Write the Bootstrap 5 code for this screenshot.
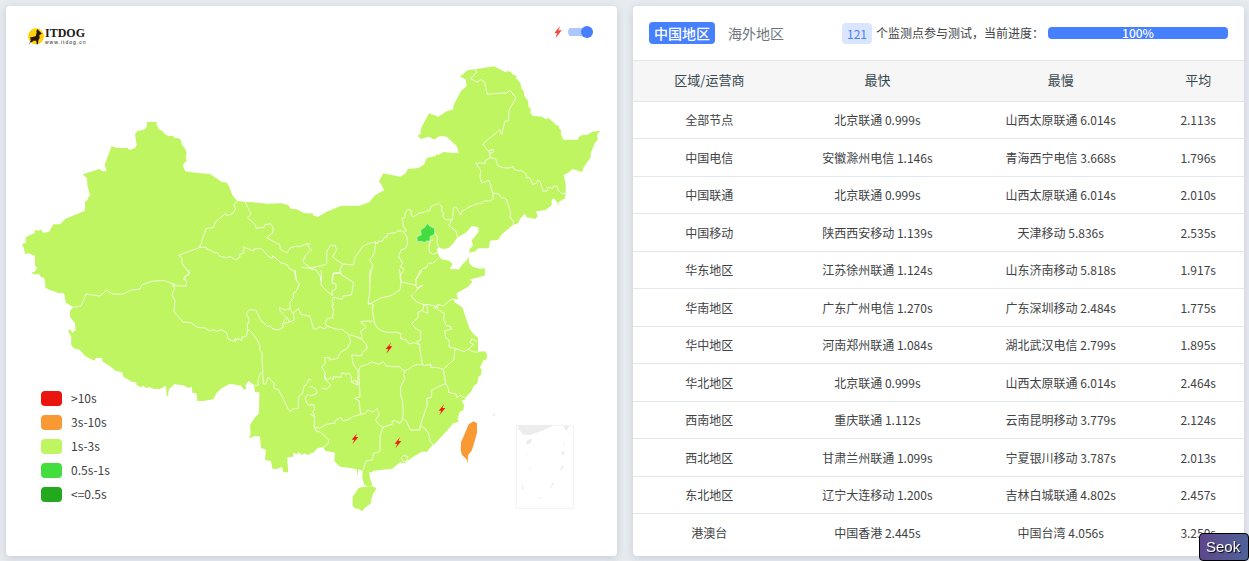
<!DOCTYPE html>
<html lang="zh-CN">
<head>
<meta charset="utf-8">
<meta name="viewport" content="width=device-width, initial-scale=1">
<title>ITDOG</title>
<link href="https://cdn.jsdelivr.net/npm/bootstrap@5.3.0/dist/css/bootstrap.min.css" rel="stylesheet">
<style>
body{background:#e8ecf1;font-family:"Noto Sans CJK SC",sans-serif;font-size:12px;line-height:18px;color:#404244;padding:6px 5px 5px 6px}
.panel-col{flex:1 1 0;min-width:0}
.panel{background:#fff;border:0;border-radius:4px;box-shadow:0 2px 10px rgba(69,90,100,.22);overflow:hidden;color:inherit}
.map-art{display:block;width:100%;height:auto}
.brand{left:21px;top:20px;color:#231815;text-decoration:none;line-height:1}
.brand-name{font:bold 12px/11px "Liberation Serif",serif}
.brand-url{font:5px/6px "Liberation Sans",sans-serif;letter-spacing:1px}
.flash-toggle{right:24px;top:19px}
.flash-toggle input{appearance:none;width:25px;height:12px;margin:0;border-radius:6px;position:relative;
 background:linear-gradient(#adc7ff,#adc7ff) left center/20px 8px no-repeat;cursor:pointer;opacity:1}
.flash-toggle input::before{content:"";position:absolute;inset:0 0 0 auto;width:12px;border-radius:50%;background:#4680ff}
.legend-list{left:35px;bottom:53px;gap:6px}
.legend-list li{height:18px;gap:9px}
.swatch{width:21px;height:15px;border-radius:4px}
.swatch.s5{background:#e91610}.swatch.s4{background:#f89934}.swatch.s3{background:#bff560}.swatch.s2{background:#44dd3f}.swatch.s1{background:#23a91e}
.head-bar{height:54px;padding:0 16px}
.region-tab{border:0;border-radius:4px;background:none;font-size:14px;line-height:22px;padding:0 5px;color:#6c757d}
.region-tab.active{background:#4680ff;color:#fff;font-weight:500}
.node-count{background:#dae6ff;color:#4680ff;border-radius:4px;padding:0 5px;line-height:21px}
.progress{width:180px;height:12px;background:#e9ecef;border-radius:4px;font-size:12px;font-weight:500}
.progress-bar{background:#4680ff}
.speed{table-layout:fixed;text-align:center;margin:0 0 4px;color:inherit}
.speed>:not(caption)>*>*{padding:0 4px;vertical-align:middle;border:0;border-top:1px solid #e2e7ed;box-shadow:none;color:inherit}
.speed>thead>tr>th{height:41px;padding-bottom:2px;background:#f6f6f6;font-size:13px;font-weight:400;color:#37474f}
.speed td{height:37px}
.speed tbody tr:nth-child(even) td{height:38px}
.c-region{width:25%}.c-node{width:30%}.c-avg{width:15%}
.seok{right:0;bottom:0;border:1px solid #000;border-radius:4px;background:linear-gradient(90deg,#5d478b,#4f6298);color:#fff;font:15px/26px "Liberation Sans",sans-serif;padding:0 6px;width:50px;text-shadow:1px 1px 1px #000;white-space:nowrap}
</style>
</head>
<body>
<main class="d-flex flex-column flex-md-row gap-3">
<section class="panel-col">
<div class="card panel h-100 position-relative">
<svg class="map-art" viewBox="18 18 1833 1650" role="img" aria-label="中国地图">
<defs><path id="bolt" d="M7-17-10 3h8L-8 17 10-5H1z" fill="#f01c10"/></defs>
<g fill="#bff560">
<path d="M441 366 471 366 468 373 474 380 474 386 487 393 495 403 507 409 519 407 524 413 535 415 543 421 546 434 556 447 560 460 557 472 560 482 550 493 550 502 556 514 585 518 630 522 666 546 681 548 689 564 697 585 712 603 735 605 770 608 800 611 845 610 865 616 872 626 890 628 910 638 934 642 934 860 160 860 135 843 132 834 122 830 118 823 107 822 104 825 94 817 104 815 112 803 105 798 105 767 85 760 75 762 72 745 66 733 77 728 77 712 105 698 103 690 118 692 123 687 128 698 147 696 160 673 180 673 197 656 255 632 255 605 265 598 262 594 270 588 262 555 261 535 248 523 298 507 307 514 320 514 314 495 335 438 352 444 383 444 388 450 405 444 410 436 405 402 413 393 435 388 441 378z"/>
<path transform="translate(930 120)" d="M-2 520 8 520 10 527 25 530 50 515 92 498 150 497 178 486 195 466 223 450 207 423 220 400 270 410 285 402 294 387 325 384 342 374 350 354 377 348 378 342 385 345 400 336 425 338 447 339 440 318 410 290 390 287 373 299 357 290 332 297 323 287 332 281 333 265 357 220 385 230 410 214 430 208 430 197 453 152 470 138 467 118 450 110 472 91 495 88 552 79 587 97 593 93 604 97 607 103 620 108 618 114 631 128 634 145 642 155 642 165 655 185 655 200 663 208 661 218 668 227 697 230 706 237 716 235 742 257 748 257 746 264 753 271 753 284 761 299 804 299 806 291 818 285 830 285 848 275 872 272 862 282 863 300 855 308 842 340 842 352 822 380 816 396 787 387 775 398 761 405 767 430 767 462 765 475 745 487 748 497 736 480 730 475 725 480 725 495 707 510 678 514 683 528 677 537 650 532 643 522 633 533 622 551 610 554 575 583 565 599 540 602 536 625 505 625 495 634 480 638 477 629 488 618 488 608 484 603 506 575 505 562 485 558 468 578 443 592 430 610 415 625 398 627 388 622 380 630 388 650 395 658 418 662 428 672 420 685 432 697 443 695 455 676 470 661 476 649 477 668 487 680 510 686 524 685 524 707 480 718 480 726-2 726z"/>
<path transform="translate(0 810)" d="M934 549 922 555 913 550 905 555 895 545 893 553 880 548 880 560 862 562 862 575 865 607 850 607 846 590 832 597 817 596 813 573 795 570 798 540 783 533 780 500 765 498 747 505 752 490 750 465 765 442 777 430 778 367 765 367 762 345 745 333 737 345 738 358 730 358 724 347 690 341 665 355 650 368 640 388 610 393 592 393 589 370 577 368 575 350 565 354 550 346 523 343 507 358 504 378 500 378 498 347 480 357 463 357 445 350 440 355 430 347 422 352 410 345 408 337 395 335 383 328 370 320 367 307 348 303 325 285 308 275 306 264 288 263 283 272 255 258 240 240 220 234 213 223 214 200 204 183 210 177 217 188 227 181 225 160 210 140 210 122 220 112 198 98 192 69 175 69 150 60 136 53 135 25 150-2H934z"/>
<path transform="translate(930 810)" d="M-2-2H524L523 17 497 16 480 28 487 36 474 50 440 70 442 82 446 88 430 86 435 98 457 112 468 145 478 175 490 192 504 203 504 245 525 244 530 250 531 268 521 270 510 292 515 300 513 315 505 320 502 340 492 347 483 365 468 380 467 388 455 392 462 405 460 420 450 425 442 447 447 455 430 460 408 485 385 510 370 525 362 530 352 545 335 545 310 560 283 580 270 577 247 596 190 602 185 608 178 605 180 625 187 645 177 650 163 645 157 625 158 602 145 598 143 618 140 598 120 594 90 590 73 573 75 548 45 542 40 530 22 535 10 548-2 549z"/>
<path transform="translate(930 810)" d="M147 653 165 650 185 648 200 655 190 670 183 690 183 700 163 715 157 724 145 716 135 715 128 708 128 680z"/>
</g>
<path transform="translate(930 120)" d="M352 550 359 558 374 565 374 583 360 590 360 603 350 603 342 608 335 604 322 605 320 591 334 584 331 570 344 562z" fill="#44dd3f" stroke="#d8f7dc" stroke-width="2"/>
<path transform="translate(930 810)" d="M491 454 501 460 501 488 495 510 486 540 474 556 473 580 469 567 456 555 452 540 453 517 463 494 476 463z" fill="#f89934"/>
<g fill="none" stroke="#fff" stroke-opacity=".78" stroke-width="3" stroke-linejoin="round">
<path d="M712 603 701 615 707 627 698 640 680 648 677 641 662 652 645 668 640 683 618 685 605 725 598 743 536 766 547 776 545 789 568 820 552 832 552 841M598 743 618 741 620 748 635 752 640 758 652 758 660 769 682 773 690 770 707 780 720 771 718 764 731 759 731 741 760 753 763 746 784 746 808 772 818 774 817 767 830 776 845 791 852 789 864 797 868 806 885 814 890 843M735 605 753 642 743 653 767 675 768 686 780 683 793 681 795 674 812 671 819 683 818 699 800 713 830 730 840 734 840 747 854 755 862 758 870 744 885 739 900 740 912 734 930 731M936 748 915 768 909 785 925 799 938 809"/>
<path transform="translate(930 120)" d="M495 88 500 97 482 116 504 127 510 118 523 125 532 163 547 161 590 159 600 151 618 174 597 210 595 243 585 243 575 283 570 269 518 312 540 340 550 337 550 328 535 333 M538 335 541 353 525 362 525 372 510 367 500 374 497 366 M541 353 557 356 563 377 578 383 598 384 609 379 613 389 625 392 635 392 647 400 650 413 660 414 668 433 679 430 683 420 690 424 699 454 712 453 713 442 728 444 730 439 741 438 745 451 755 460 767 460M500 374 512 391 510 412 516 429 537 421 548 458 568 463 573 473 588 476 602 517 600 530 610 545 610 554M548 458 550 476 541 482 520 484 516 490 502 491 476 502 457 513 452 525 440 503 431 502 426 540 416 557 437 572 443 592M426 540 405 539 398 528 402 520 395 514 396 500 385 490 362 500 360 512 344 515 335 519 331 518 310 530 305 527 302 509 292 510 285 520 285 532 277 535 280 560 290 573 281 577 290 588 293 612 286 625 273 630 266 650 278 670 270 680 282 686 270 710 273 724 M281 573 262 573 257 578 232 581 230 592 223 592 218 603 205 604 202 612 198 606 185 608 172 612 160 618 135 652 130 675 98 672 75 657 68 650 80 630 75 616 62 616 50 635 50 670 45 674 0 685M197 606 193 640 179 660 189 677 180 707 180 724M-8 610 0 630M-25 682 0 685 18 690 30 707 33 724M98 672 90 690 92 700 70 700 67 724M374 580 383 590 381 608 385 620 382 638 368 643 358 635 357 622 360 603 370 600M385 655 368 670 355 670 350 683 337 686 330 702 315 720"/>
<path transform="translate(0 810)" d="M220 112 243 108 258 72 300 78 320 60 337 72 366 73 393 61 420 57 425 45 455 34 490 31 524 43 521 48 530 47 558 48 560 35 552 25 568 12 566 0M516 43 524 55 516 75 525 92 522 125 550 157 573 158 592 172 616 174 629 183 641 179 650 184 664 179 680 188 685 208 700 213 706 205 706 216 712 205 725 212 727 201 738 200 743 180 750 182 772 210 780 230 779 237 786 250 788 310 790 342 797 342 804 321 822 340 822 356 835 358 865 418 870 424 880 417 895 415 895 380 908 370 912 350 922 340 926 327 934 330M743 180 742 165 748 150 739 129 749 118 769 122 783 152 804 171 809 166 817 176 834 180 850 172 847 160 865 157 883 150 880 130 895 115 903 133 930 139M884 0 888 30 898 42 888 65 880 70 880 85 870 97 870 116 856 120 838 113 840 122 860 145 849 155M872 118 878 130 M862 142 868 157 M790 303 780 313 774 330 775 345 765 347M930 373 920 375 916 387 922 403 934 407"/>
<path transform="translate(930 810)" d="M33 0 35 25 33 45 52 65 68 77 66 63 78 57 78 42 67 40 67 20 72 8 90 8M92 0 92 12 131 38 128 58 124 75 98 78 97 88 70 82 66 93 71 103 66 105 71 122 68 143 50 147 45 163 53 169 42 177 30 170 18 177 10 176 5 156 0 140M53 169 80 178 96 178 116 193 122 215 112 235 90 248 83 265 58 270 60 263 44 263 46 279 35 292 46 308 44 318 52 330 63 322 70 330 70 320 93 322 95 308 105 312 118 310 124 320 125 337 143 345 145 303 130 283 125 255 155 258 158 246 171 236 170 225 155 207 138 200 120 194M155 208 155 194 152 183 168 173 152 155 173 153 193 155 198 170 213 182 235 188 257 187 272 190 272 206 290 210 297 222 310 218 330 224 329 233 337 283 315 285 285 303 277 299 270 290 242 290 229 288 220 275 206 283 185 275 170 284 150 290 146 305 150 380 134 385 148 393 150 420 154 433 128 440 112 450 98 452 93 442 75 452 75 459 50 463 28 475 12 470 14 440 0 432M180-2 179 70 174 100 190 103 187 120 193 155M268-2 273 35 270 60 240 78 215 83 174 104M273 35 318 46 320 55 339 45 328 53 303 78 320 96 343 104 352 103 M318 45 318 30 331 0M352 103 375 108 375 116 383 103 400 108 418 92 430 86M352 103 342 105 338 120 324 127 324 143 305 160 316 175 332 184 331 211 320 215 330 224M350 104 354 130 338 124M383 106 382 118 403 130 401 150 409 167 422 170 424 178 404 182 407 204 418 211 417 231 435 235 462 245 476 237 485 244 503 247M476 237 491 223 480 218 485 207 502 215M435 235 432 270 422 277 400 298 383 293 362 292 363 283 342 287 337 283M400 298 407 340 365 360 365 382 350 385 352 405 338 445 331 468 345 475 357 493 360 513 370 525M407 340 415 355 416 367 440 373 440 383 452 375 458 380 468 386M285 303 280 315 285 325 272 350 272 375 277 390 280 425 278 445 290 455 301 480 331 480 329 468M278 445 270 460 257 453 246 453 248 462 219 472 208 465 197 450 207 433 200 415 188 427 175 420 166 430 154 433M219 472 210 500 210 545 190 550 187 570 170 572 164 583 160 600M274 565 280 556 294 560 292 572 280 575zM12 470 20 485 30 485 35 490 56 510 54 522 42 530M0 350 7 350 20 360 20 371 0 378M35 355 50 357 63 345 46 330 43 317 M0 403 12 405 14 420 8 425 14 440M125 337 135 330 145 345"/>
</g>
<g transform="translate(930 810)">
<use href="#bolt" x="237" y="234"/><use href="#bolt" x="396" y="419"/><use href="#bolt" x="135" y="506"/><use href="#bolt" x="264" y="518"/>
<path d="M619 466H791V715H619z" fill="none" stroke="#f2f2f2" stroke-width="3"/>
<path d="M626 466H732L697 482 660 495 640 494 623 475zM760 468 778 467 769 484zM652 510 667 506 660 521 648 524zM755 544H762V556H755zM757 586 762 588 754 601 750 600zM637 639 642 659 636 655zM662 591 664 594 653 602zM730 637 732 641 722 655 719 654zM683 683 695 682 692 686zM545 436 557 430 555 437zM783 484 778 497 777 491zM766 510 764 525 761 524zM650 550 655 560 653 561z" fill="#ececec"/>
</g>
</svg>
<a href="#" class="brand position-absolute d-flex align-items-center" aria-label="ITDOG">
<svg width="18" height="20" viewBox="0 0 54 60" aria-hidden="true"><circle cx="27" cy="31" r="24" fill="#ffd20a"/><path d="M32 9 36 14 45 23 37 27 38 36 34 43 33 55 29 55 28 44 18 44 16 48 11 49 5 56 11 44 10 32 13 34 26 31 29 20 28 15z" fill="#2a180f"/></svg>
<span class="d-flex flex-column"><span class="brand-name">ITDOG</span><span class="brand-url">www.itdog.cn</span></span>
</a>
<label class="flash-toggle position-absolute d-flex align-items-center gap-1">
<svg width="12" height="14" viewBox="-18 -21 36 42" role="img" aria-label="闪电"><path d="M7-19-11 3h8L-7 18 11-5H1z" fill="#ff4438"/></svg>
<input type="checkbox" role="switch" checked>
</label>
<ul class="legend-list list-unstyled position-absolute d-flex flex-column mb-0">
<li class="d-flex align-items-center"><span class="swatch s5"></span>&gt;10s</li>
<li class="d-flex align-items-center"><span class="swatch s4"></span>3s-10s</li>
<li class="d-flex align-items-center"><span class="swatch s3"></span>1s-3s</li>
<li class="d-flex align-items-center"><span class="swatch s2"></span>0.5s-1s</li>
<li class="d-flex align-items-center"><span class="swatch s1"></span>&lt;=0.5s</li>
</ul>
</div>
</section>
<section class="panel-col">
<div class="card panel h-100">
<div class="head-bar d-flex align-items-center justify-content-between text-nowrap">
<div class="d-flex gap-2"><button type="button" class="region-tab active">中国地区</button><button type="button" class="region-tab">海外地区</button></div>
<div class="d-flex align-items-center gap-1"><span class="node-count">121</span><span>个监测点参与测试，当前进度：</span>
<div class="progress" role="progressbar" aria-label="当前进度" aria-valuenow="100" aria-valuemin="0" aria-valuemax="100"><div class="progress-bar overflow-visible" style="width:100%">100%</div></div></div>
</div>
<table class="table speed">
<thead><tr><th class="c-region" scope="col">区域/运营商</th><th class="c-node" scope="col">最快</th><th class="c-node" scope="col">最慢</th><th class="c-avg" scope="col">平均</th></tr></thead>
<tbody>
<tr><td>全部节点</td><td>北京联通 0.999s</td><td>山西太原联通 6.014s</td><td>2.113s</td></tr>
<tr><td>中国电信</td><td>安徽滁州电信 1.146s</td><td>青海西宁电信 3.668s</td><td>1.796s</td></tr>
<tr><td>中国联通</td><td>北京联通 0.999s</td><td>山西太原联通 6.014s</td><td>2.010s</td></tr>
<tr><td>中国移动</td><td>陕西西安移动 1.139s</td><td>天津移动 5.836s</td><td>2.535s</td></tr>
<tr><td>华东地区</td><td>江苏徐州联通 1.124s</td><td>山东济南移动 5.818s</td><td>1.917s</td></tr>
<tr><td>华南地区</td><td>广东广州电信 1.270s</td><td>广东深圳移动 2.484s</td><td>1.775s</td></tr>
<tr><td>华中地区</td><td>河南郑州联通 1.084s</td><td>湖北武汉电信 2.799s</td><td>1.895s</td></tr>
<tr><td>华北地区</td><td>北京联通 0.999s</td><td>山西太原联通 6.014s</td><td>2.464s</td></tr>
<tr><td>西南地区</td><td>重庆联通 1.112s</td><td>云南昆明移动 3.779s</td><td>2.124s</td></tr>
<tr><td>西北地区</td><td>甘肃兰州联通 1.099s</td><td>宁夏银川移动 3.787s</td><td>2.013s</td></tr>
<tr><td>东北地区</td><td>辽宁大连移动 1.200s</td><td>吉林白城联通 4.802s</td><td>2.457s</td></tr>
<tr><td>港澳台</td><td>中国香港 2.445s</td><td>中国台湾 4.056s</td><td>3.250s</td></tr>
</tbody>
</table>
</div>
</section>
</main>
<div class="seok position-fixed">Seok</div>
<script src="https://cdn.jsdelivr.net/npm/bootstrap@5.3.0/dist/js/bootstrap.bundle.min.js"></script>
</body>
</html>
